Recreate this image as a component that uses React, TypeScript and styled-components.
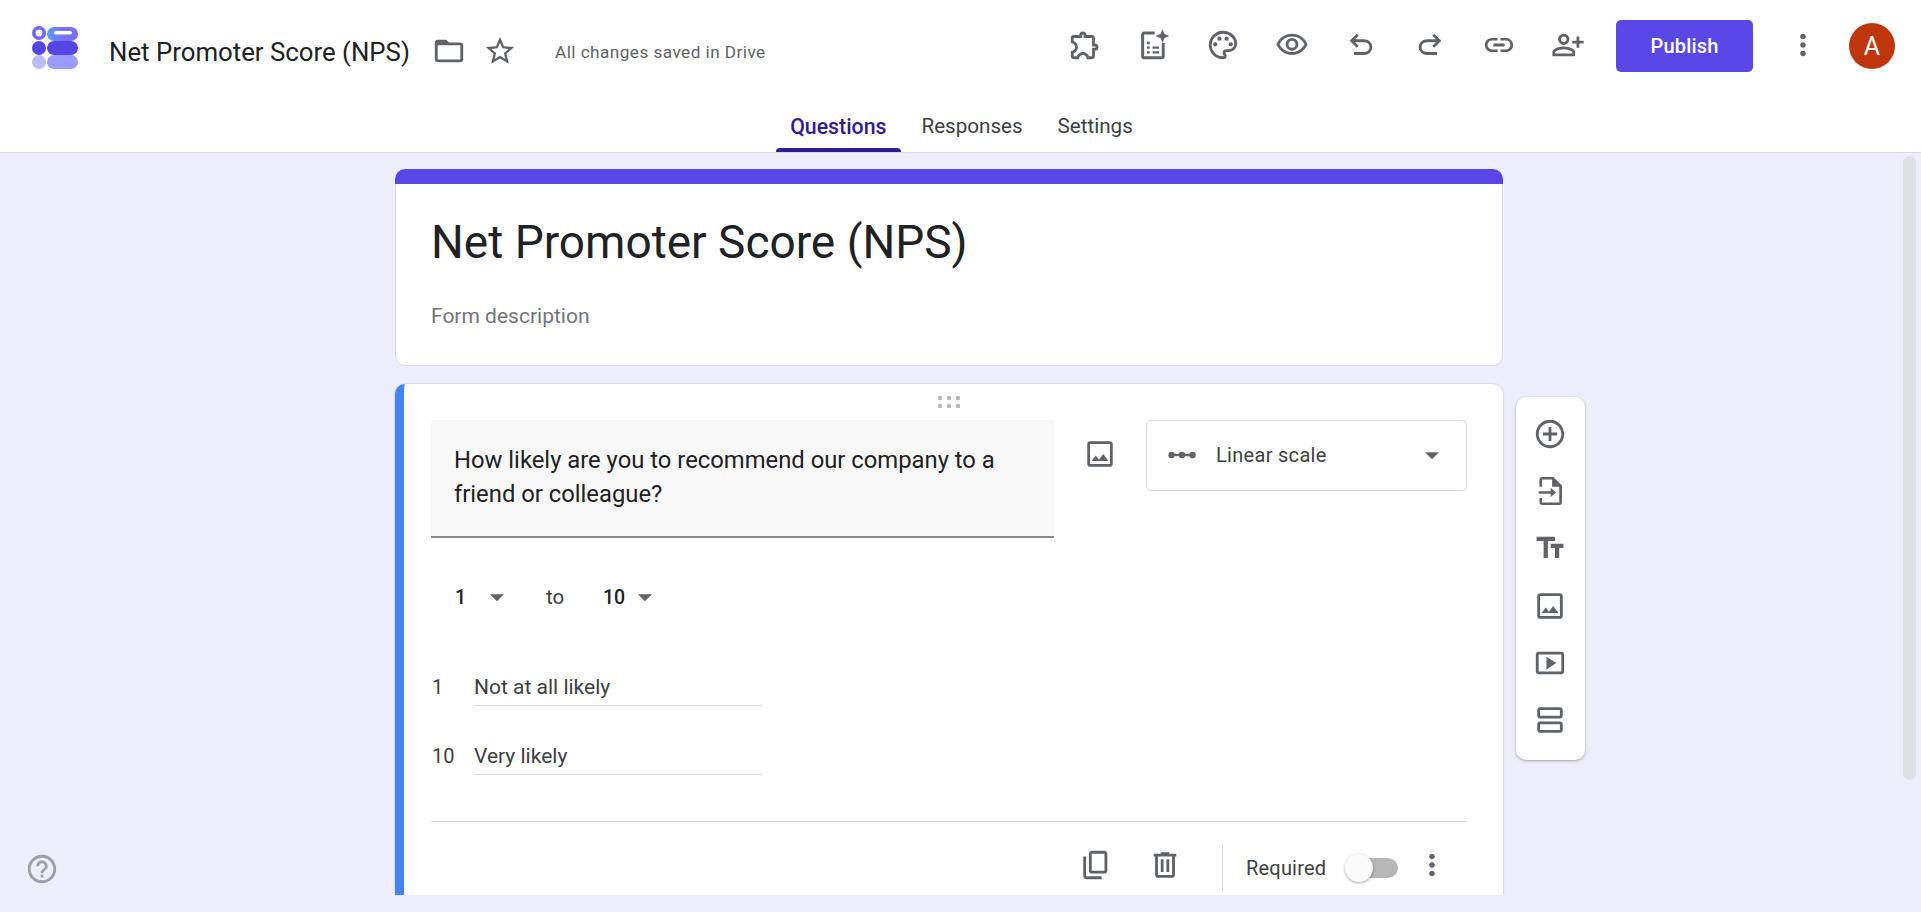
import styled, { createGlobalStyle } from "styled-components";
import {
  MdOutlineExtension,
  MdOutlinePalette,
  MdOutlineVisibility,
  MdLink,
  MdMoreVert,
  MdStarBorder,
  MdAddCircleOutline,
  MdTextFields,
  MdOutlineSmartDisplay,
  MdOutlineViewAgenda,
  MdHelpOutline,
  MdArrowDropDown,
} from "react-icons/md";

const ICON = 34;
const INK = "#5f6368";

const GlobalStyle = createGlobalStyle`
  html, body {
    margin: 0;
    padding: 0;
    background: #eeedfc;
    font-family: Roboto, "Liberation Sans", sans-serif;
    color: #202124;
  }
`;

const Page = styled.div`
  position: relative;
  height: 912px;
  overflow: hidden;
  background: #eeedfc;
`;

const Header = styled.header`
  height: 153px;
  box-sizing: border-box;
  background: #fff;
  border-bottom: 1px solid #d9d9de;
`;

const TopBar = styled.div`
  height: 92px;
  display: flex;
  align-items: center;
`;

const LogoBox = styled.div`
  width: 54px;
  height: 46px;
  margin: 3px 23px 0 32px;
  flex: none;
`;

const DocTitle = styled.div`
  font-size: 25.8px;
  color: #202124;
  width: 323px;
  flex: none;
  margin-top: 12px;
  white-space: nowrap;
`;

const TitleIcon = styled.div`
  width: 34px;
  height: 34px;
  margin-top: 10px;
  margin-right: 17px;
  flex: none;
  color: ${INK};
`;

const SavedNote = styled.div`
  font-size: 17.2px;
  letter-spacing: 0.45px;
  color: ${INK};
  margin-left: 21px;
  margin-top: 12px;
  white-space: nowrap;
`;

const Actions = styled.div`
  margin-left: auto;
  display: flex;
  align-items: center;
  padding-right: 26px;
`;

const ActionIcon = styled.div`
  width: 69px;
  height: 34px;
  margin-top: -2px;
  display: flex;
  justify-content: center;
  color: ${INK};
`;

const PublishButton = styled.button`
  width: 137px;
  height: 52px;
  margin-left: 14px;
  border: 0;
  border-radius: 5px;
  background: #5a48e6;
  color: #fff;
  font: 500 20px Roboto, sans-serif;
  letter-spacing: 0.2px;
`;

const MoreSlot = styled.div`
  width: 34px;
  height: 34px;
  margin-left: 33px;
  margin-top: -2px;
  color: ${INK};
`;

const Avatar = styled.div`
  width: 46px;
  height: 46px;
  margin-left: 29px;
  border-radius: 50%;
  background: #bf360c;
  color: #fff;
  font-size: 25px;
  display: flex;
  align-items: center;
  justify-content: center;
`;

const Tabs = styled.nav`
  height: 60px;
  padding-left: 2px;
  display: flex;
  justify-content: center;
  gap: 7px;
`;

const Tab = styled.div<{ $active?: boolean }>`
  position: relative;
  padding: 22px 14px 0;
  font-size: ${(p) => (p.$active ? "21.3px" : "20.6px")};
  font-weight: ${(p) => (p.$active ? 500 : 400)};
  color: ${(p) => (p.$active ? "#311b92" : "#3c4043")};
  &::after {
    content: "";
    display: ${(p) => (p.$active ? "block" : "none")};
    position: absolute;
    left: 0;
    right: 0;
    bottom: 0;
    height: 4px;
    border-radius: 4px 4px 0 0;
    background: #311b92;
  }
`;

const Workspace = styled.main`
  height: 742px;
  overflow: hidden;
  padding: 16px 0 0 395px;
  box-sizing: border-box;
`;

const Stack = styled.div`
  display: flex;
  flex-direction: column;
  gap: 18px;
`;

const HeaderCard = styled.section`
  width: 1108px;
`;

const ThemeBand = styled.div`
  height: 15px;
  background: #5a48e6;
  border-radius: 10px 10px 0 0;
`;

const HeaderBody = styled.div`
  height: 182px;
  box-sizing: border-box;
  padding: 35px 35px 0;
  background: #fff;
  border: 1px solid #dcdce4;
  border-top: 0;
  border-radius: 0 0 10px 10px;
`;

const FormTitle = styled.h1`
  margin: 0;
  font-size: 46px;
  font-weight: 400;
  line-height: 46px;
  color: #202124;
`;

const FormDescription = styled.div`
  margin-top: 38px;
  font-size: 21px;
  line-height: 26px;
  color: #70757a;
`;

const QuestionRow = styled.div`
  display: flex;
  align-items: flex-start;
`;

const QuestionCard = styled.section`
  width: 1108px;
  box-sizing: border-box;
  padding: 0 36px 30px 27px;
  background: #fff;
  border-left: 9px solid #4285f4;
  border-radius: 10px 10px 0 0;
  box-shadow: 0 0 2px rgba(60, 64, 67, 0.35);
`;

const DragRow = styled.div`
  height: 36px;
  display: flex;
  align-items: center;
  justify-content: center;
`;

const QuestionTop = styled.div`
  display: flex;
  align-items: flex-start;
`;

const QuestionField = styled.div`
  width: 623px;
  height: 118px;
  box-sizing: border-box;
  padding: 23px 23px 0;
  background: #f8f8f8;
  border-bottom: 2px solid #888;
  font-size: 23.8px;
  line-height: 34px;
  color: #202124;
`;

const MediaSlot = styled.div`
  width: 92px;
  height: 68px;
  display: flex;
  align-items: center;
  justify-content: center;
  color: ${INK};
`;

const TypeSelect = styled.div`
  width: 321px;
  height: 71px;
  box-sizing: border-box;
  padding: 0 17px 2px 20px;
  display: flex;
  align-items: center;
  border: 1px solid #dadce0;
  border-radius: 5px;
  color: ${INK};
`;

const TypeLabel = styled.span`
  flex: 1;
  margin-left: 19px;
  font-size: 20px;
  letter-spacing: 0.3px;
  color: #3c4043;
`;

const ScaleRow = styled.div`
  height: 40px;
  margin-top: 39px;
  padding-left: 24px;
  display: flex;
  align-items: center;
  font-size: 20.5px;
  color: #3c4043;
`;

const ScaleValue = styled.span`
  width: 25px;
  font-weight: 500;
  font-size: 19.5px;
  color: #202124;
`;

const ScaleArrow = styled.span`
  width: 34px;
  height: 34px;
  color: ${INK};
`;

const ScaleTo = styled.span`
  width: 57px;
  margin-left: 32px;
`;

const LabelRow = styled.div`
  display: flex;
  margin-top: 30px;
  &:first-of-type {
    margin-top: 50px;
  }
`;

const LabelNumber = styled.div`
  width: 43px;
  height: 39px;
  padding-left: 1px;
  box-sizing: border-box;
  font-size: 20px;
  line-height: 41px;
  color: #3c4043;
`;

const LabelInput = styled.div`
  width: 288px;
  height: 39px;
  box-sizing: border-box;
  border-bottom: 1px solid #dadce0;
  font-size: 21px;
  line-height: 41px;
  color: #3c4043;
`;

const LabelList = styled.div``;

const Divider = styled.hr`
  margin: 46px 0 0;
  border: 0;
  border-top: 1px solid #dadce0;
`;

const Footer = styled.div`
  height: 46px;
  margin-top: 23px;
  padding-right: 18px;
  display: flex;
  align-items: center;
  justify-content: flex-end;
`;

const FooterIcon = styled.div<{ $gap: number }>`
  width: 34px;
  height: 34px;
  margin: 0 ${(p) => p.$gap}px 6px 0;
  color: ${INK};
`;

const FooterRule = styled.div`
  width: 1px;
  height: 46px;
  margin-right: 23px;
  background: #dadce0;
`;

const RequiredLabel = styled.span`
  width: 101px;
  font-size: 20px;
  letter-spacing: 0.2px;
  color: #3c4043;
`;

const ToggleTrack = styled.div`
  position: relative;
  width: 51px;
  height: 20px;
  margin-right: 17px;
  border-radius: 10px;
  background: #b7b7b7;
`;

const ToggleThumb = styled.div`
  position: absolute;
  left: -2px;
  top: -4px;
  width: 28px;
  height: 28px;
  border-radius: 50%;
  background: #fafafa;
  box-shadow: 0 1px 3px rgba(0, 0, 0, 0.35);
`;

const SideRail = styled.aside`
  width: 69px;
  height: 363px;
  box-sizing: border-box;
  margin: 13px 0 0 13px;
  padding-top: 20px;
  padding-right: 1px;
  display: flex;
  flex-direction: column;
  align-items: center;
  gap: 23.2px;
  background: #fff;
  border-radius: 10px;
  box-shadow: 0 1px 3px rgba(60, 64, 67, 0.45);
  color: ${INK};
`;

const RailIcon = styled.div`
  width: 34px;
  height: 34px;
`;

const HelpButton = styled.div`
  position: absolute;
  left: 25px;
  top: 852px;
  width: 34px;
  height: 34px;
  color: #9aa0a6;
`;

const ScrollThumb = styled.div`
  position: absolute;
  left: 1903px;
  top: 156px;
  width: 13px;
  height: 624px;
  border-radius: 7px;
  background: #dfe0e1;
`;

const Logo = () => (
  <svg width="54" height="46" viewBox="32 26 54 46" fill="none">
    <defs>
      <linearGradient id="topPill" x1="0" x2="1" y1="0" y2="0">
        <stop offset="0" stopColor="#5aa0fb" />
        <stop offset="0.5" stopColor="#7a70f4" />
        <stop offset="1" stopColor="#7a70f4" />
      </linearGradient>
    </defs>
    <circle cx="39" cy="34" r="5.2" stroke="#6f68f2" strokeWidth="3.6" fill="#fff" />
    <rect x="47" y="28" width="31" height="14" rx="7" fill="url(#topPill)" />
    <rect x="54" y="32" width="18" height="3.6" rx="1.8" fill="#fff" />
    <circle cx="39" cy="49" r="7" fill="#5546e4" />
    <rect x="47" y="42" width="31" height="14" rx="7" fill="#5546e4" />
    <circle cx="39" cy="63" r="7" fill="#b9bcff" />
    <rect x="47" y="56" width="31" height="14" rx="7" fill="#9a9dff" />
  </svg>
);

// material symbols glyphs, the md set has older shapes for these
const Symbol = ({ d }: { d: string }) => (
  <svg width={ICON} height={ICON} viewBox="0 -960 960 960" fill="currentColor" fillRule="evenodd">
    <path d={d} />
  </svg>
);

const GLYPHS = {
  undo: "M280-200v-80h284q63 0 109.5-40T720-420q0-60-46.5-100T564-560H312l104 104-56 56-200-200 200-200 56 56-104 104h252q97 0 166.5 63T800-420q0 94-69.5 157T564-200H280Z",
  redo: "M396-200q-97 0-166.5-63T160-420q0-94 69.5-157T396-640h252L544-744l56-56 200 200-200 200-56-56 104-104H396q-63 0-109.5 40T240-420q0 60 46.5 100T396-280h284v80H396Z",
  personAdd:
    "M720-400v-120H600v-80h120v-120h80v120h120v80H800v120h-80Zm-360-80q-66 0-113-47t-47-113q0-66 47-113t113-47q66 0 113 47t47 113q0 66-47 113t-113 47ZM40-160v-112q0-34 17.5-62.5T104-377q62-31 126-46.5T360-439q66 0 130 15.5T616-377q29 15 46.5 43.5T680-272v112H40Zm80-80h480v-32q0-11-5.5-20T580-306q-54-27-109-40.5T360-360q-56 0-111 13.5T140-306q-9 5-14.5 14t-5.5 20v32Zm240-320q33 0 56.5-23.5T440-640q0-33-23.5-56.5T360-720q-33 0-56.5 23.5T280-640q0 33 23.5 56.5T360-560Z",
  folder:
    "M160-160q-33 0-56.5-23.5T80-240v-480q0-33 23.5-56.5T160-800h240l80 80h320q33 0 56.5 23.5T880-640v400q0 33-23.5 56.5T800-160H160Zm0-80h640v-400H160v400Z",
  copy: "M360-240q-33 0-56.5-23.5T280-320v-480q0-33 23.5-56.5T360-880h360q33 0 56.5 23.5T800-800v480q0 33-23.5 56.5T720-240H360Zm0-80h360v-480H360v480ZM200-80q-33 0-56.5-23.5T120-160v-560h80v560h440v80H200Z",
  trash:
    "M280-120q-33 0-56.5-23.5T200-200v-520h-40v-80h200v-40h240v40h200v80h-40v520q0 33-23.5 56.5T680-120H280Zm400-600H280v520h400v-520ZM360-280h80v-360h-80v360Zm160 0h80v-360h-80v360Z",
  image:
    "M200-120q-33 0-56.5-23.5T120-200v-560q0-33 23.5-56.5T200-840h560q33 0 56.5 23.5T840-760v560q0 33-23.5 56.5T760-120H200Zm0-80h560v-560H200v560Zm40-80h480L570-480 450-320l-90-120-120 160Z",
};

const FormSparkIcon = () => (
  <svg width={ICON} height={ICON} viewBox="0 0 24 24" fill="none">
    <path
      d="M12.5 3.5H5a1 1 0 0 0-1 1V20a1 1 0 0 0 1 1h12.5a1 1 0 0 0 1-1V10.5"
      stroke="currentColor"
      strokeWidth="2.1"
    />
    <path
      d="M18 .8l1.4 3.5 3.5 1.4-3.5 1.4L18 10.6l-1.4-3.5-3.5-1.4 3.5-1.4z"
      fill="currentColor"
    />
    <path
      d="M7 9.5h2v2H7zM11 13h4.5v1.6H11zM7 13h2v1.6H7zM7 16.4h2V18H7zM11 16.4h4.5V18H11z"
      fill="currentColor"
    />
  </svg>
);

const ImportIcon = () => (
  <svg width={ICON} height={ICON} viewBox="0 0 24 24" fill="none">
    <path
      d="M5.5 9V4a1 1 0 0 1 1-1H14l5.5 5.5V20a1 1 0 0 1-1 1h-12a1 1 0 0 1-1-1v-3"
      stroke="currentColor"
      strokeWidth="1.9"
    />
    <path d="M13.5 3v6h6z" fill="currentColor" />
    <path d="M4 12.1h8.5v-2.4l3.8 3.3-3.8 3.3v-2.4H4z" fill="currentColor" />
  </svg>
);

const ScaleDots = () => (
  <svg width="30" height="12" viewBox="0 0 30 12" fill="currentColor">
    <rect x="3" y="4.8" width="24" height="2.4" />
    <circle cx="4.5" cy="6" r="3.2" />
    <circle cx="15" cy="6" r="3.2" />
    <circle cx="25.5" cy="6" r="3.2" />
  </svg>
);

const DragDots = () => (
  <svg width="22" height="12" viewBox="0 0 22 12" fill="#b5b8bd">
    {[2, 11, 20].map((x) =>
      [2, 10].map((y) => <circle key={`${x}-${y}`} cx={x} cy={y} r="2.2" />)
    )}
  </svg>
);

const App = () => {
  return (
    <Page>
      <GlobalStyle />
      <Header>
        <TopBar>
          <LogoBox>
            <Logo />
          </LogoBox>
          <DocTitle>Net Promoter Score (NPS)</DocTitle>
          <TitleIcon>
            <Symbol d={GLYPHS.folder} />
          </TitleIcon>
          <TitleIcon>
            <MdStarBorder size={ICON} />
          </TitleIcon>
          <SavedNote>All changes saved in Drive</SavedNote>
          <Actions>
            <ActionIcon>
              <MdOutlineExtension size={ICON} />
            </ActionIcon>
            <ActionIcon>
              <FormSparkIcon />
            </ActionIcon>
            <ActionIcon>
              <MdOutlinePalette size={ICON} />
            </ActionIcon>
            <ActionIcon>
              <MdOutlineVisibility size={ICON} />
            </ActionIcon>
            <ActionIcon>
              <Symbol d={GLYPHS.undo} />
            </ActionIcon>
            <ActionIcon>
              <Symbol d={GLYPHS.redo} />
            </ActionIcon>
            <ActionIcon>
              <MdLink size={ICON} />
            </ActionIcon>
            <ActionIcon>
              <Symbol d={GLYPHS.personAdd} />
            </ActionIcon>
            <PublishButton>Publish</PublishButton>
            <MoreSlot>
              <MdMoreVert size={ICON} />
            </MoreSlot>
            <Avatar>A</Avatar>
          </Actions>
        </TopBar>
        <Tabs>
          <Tab $active>Questions</Tab>
          <Tab>Responses</Tab>
          <Tab>Settings</Tab>
        </Tabs>
      </Header>

      <Workspace>
        <Stack>
          <HeaderCard>
            <ThemeBand />
            <HeaderBody>
              <FormTitle>Net Promoter Score (NPS)</FormTitle>
              <FormDescription>Form description</FormDescription>
            </HeaderBody>
          </HeaderCard>

          <QuestionRow>
            <QuestionCard>
              <DragRow>
                <DragDots />
              </DragRow>
              <QuestionTop>
                <QuestionField>
                  How likely are you to recommend our company to a friend or colleague?
                </QuestionField>
                <MediaSlot>
                  <Symbol d={GLYPHS.image} />
                </MediaSlot>
                <TypeSelect>
                  <ScaleDots />
                  <TypeLabel>Linear scale</TypeLabel>
                  <MdArrowDropDown size={ICON} />
                </TypeSelect>
              </QuestionTop>
              <ScaleRow>
                <ScaleValue>1</ScaleValue>
                <ScaleArrow>
                  <MdArrowDropDown size={ICON} />
                </ScaleArrow>
                <ScaleTo>to</ScaleTo>
                <ScaleValue>10</ScaleValue>
                <ScaleArrow>
                  <MdArrowDropDown size={ICON} />
                </ScaleArrow>
              </ScaleRow>
              <LabelList>
                <LabelRow>
                  <LabelNumber>1</LabelNumber>
                  <LabelInput>Not at all likely</LabelInput>
                </LabelRow>
                <LabelRow>
                  <LabelNumber>10</LabelNumber>
                  <LabelInput>Very likely</LabelInput>
                </LabelRow>
              </LabelList>
              <Divider />
              <Footer>
                <FooterIcon $gap={35}>
                  <Symbol d={GLYPHS.copy} />
                </FooterIcon>
                <FooterIcon $gap={40}>
                  <Symbol d={GLYPHS.trash} />
                </FooterIcon>
                <FooterRule />
                <RequiredLabel>Required</RequiredLabel>
                <ToggleTrack>
                  <ToggleThumb />
                </ToggleTrack>
                <FooterIcon $gap={0}>
                  <MdMoreVert size={ICON} />
                </FooterIcon>
              </Footer>
            </QuestionCard>
            <SideRail>
              <RailIcon>
                <MdAddCircleOutline size={ICON} />
              </RailIcon>
              <RailIcon>
                <ImportIcon />
              </RailIcon>
              <RailIcon>
                <MdTextFields size={ICON} />
              </RailIcon>
              <RailIcon>
                <Symbol d={GLYPHS.image} />
              </RailIcon>
              <RailIcon>
                <MdOutlineSmartDisplay size={ICON} />
              </RailIcon>
              <RailIcon>
                <MdOutlineViewAgenda size={ICON} />
              </RailIcon>
            </SideRail>
          </QuestionRow>
        </Stack>
      </Workspace>

      <HelpButton>
        <MdHelpOutline size={ICON} />
      </HelpButton>
      <ScrollThumb />
    </Page>
  );
};

export default App;
